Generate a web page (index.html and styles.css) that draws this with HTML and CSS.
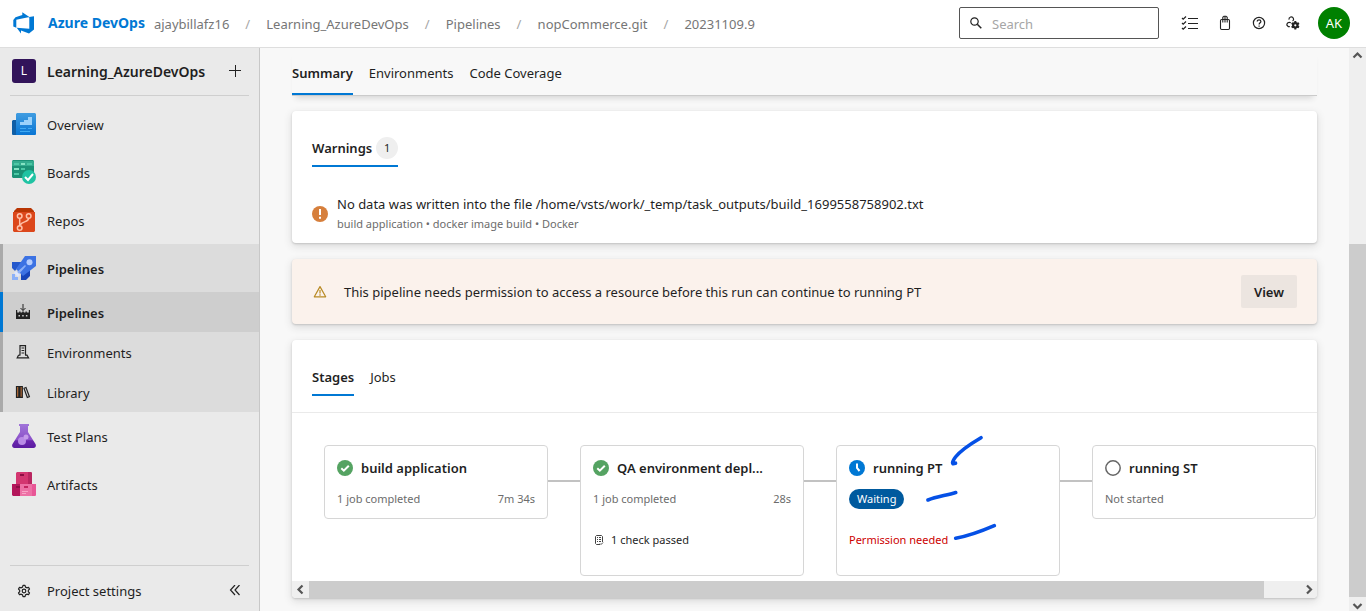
FILE: index.html
```html
<!DOCTYPE html>
<html lang="en">
<head>
<meta charset="utf-8">
<title>Pipelines - Run 20231109.9</title>
<link rel="stylesheet" href="styles.css">
</head>
<body>
<div class="app">
  <header class="topbar">
    <a class="brand" href="#">
      <svg width="24" height="24" viewBox="0 0 24 24"><path fill="#0078d4" d="M22 5.3v13.1l-5 4.1-8-2.9v2.9l-4.300-5.700 12.600 1V5.900zM17.400 6 10.300 1.200v2.900L3.500 6.200 1.300 9v6.500l3 1.300V8.700z"/></svg>
      <span>Azure DevOps</span>
    </a>
    <nav class="crumbs" aria-label="Breadcrumb">
      <a href="#">ajaybillafz16</a><span class="sep">/</span>
      <a href="#">Learning_AzureDevOps</a><span class="sep">/</span>
      <a href="#">Pipelines</a><span class="sep">/</span>
      <a href="#">nopCommerce.git</a><span class="sep">/</span>
      <a href="#">20231109.9</a>
    </nav>
    <label class="search">
      <svg width="12" height="12" viewBox="0 0 12 12" fill="none" stroke="#222"><circle cx="4.500" cy="4.500" r="3.700" stroke-width="1.200"/><path stroke-width="1.500" d="m7.300 7.300 4 4"/></svg>
      <input type="text" placeholder="Search" aria-label="Search">
    </label>
    <div class="tools">
      <button class="tool" aria-label="Work items"><svg width="18" height="16" viewBox="0 0 18 16" fill="none" stroke="#222" stroke-width="1.200"><path d="M7 3.500h10M7 8.500h10M7 13.500h10M1 3l1.200 1.200L5 1.500M1 8l1.200 1.200L5 6.500M1 13l1.200 1.200L5 11.500"/></svg></button>
      <button class="tool" aria-label="Marketplace"><svg width="16" height="16" viewBox="0 0 16 16" fill="none" stroke="#222" stroke-width="1.100"><rect x="3.500" y="4.500" width="9" height="10" rx="1.200"/><path d="M5.800 7.500V2.300L7 1.200h2l1.200 1.100v5.200M8 1.200v6.300"/></svg></button>
      <button class="tool" aria-label="Help"><svg width="16" height="16" viewBox="0 0 16 16" fill="none" stroke="#222" stroke-width="1.200"><circle cx="8" cy="8" r="5.600"/><path d="M6.200 6.600C6.200 4.200 9.900 4.300 9.900 6.500 9.900 7.800 8.100 7.800 8.100 9.500M8.100 10.600v1.200"/></svg></button>
      <button class="tool" aria-label="User settings"><svg width="16" height="16" viewBox="0 0 16 16" fill="none" stroke="#222" stroke-width="1.200"><path d="M4 4.600a2.300 2.300 0 1 1 3.600 1.500M5.800 7.700C3.400 6.700 1.800 8 1.800 10l1.500 1.600h1.500"/><circle cx="10.300" cy="10.300" r="2.200" stroke-width="2.200"/><path stroke-width="2" d="M10.300 6v2M10.300 12.600v2M6.600 8.200l1.800 1M12.200 11.400l1.800 1M6.600 12.400l1.800-1M12.200 9.200l1.800-1"/></svg></button>
    </div>
    <button class="avatar" aria-label="Account">AK</button>
  </header>

  <div class="body">
    <aside class="sidebar">
      <div class="project">
        <span class="project-badge">L</span>
        <a class="project-name" href="#">Learning_AzureDevOps</a>
        <button class="icon-btn" aria-label="Add"><svg width="12" height="12" viewBox="0 0 12 12" stroke="#222" stroke-width="1"><path d="M6.500 0v12M0 5.500h12"/></svg></button>
      </div>
      <nav class="nav">
        <a class="hub" href="#">
          <svg width="24" height="24" viewBox="0 0 24 24"><defs><linearGradient id="ov" x2="0" y2="1"><stop stop-color="#419de1"/><stop offset="1" stop-color="#0875d4"/></linearGradient></defs><path fill="#0f5ea6" d="M1 8h4v15H1a1 1 0 0 1-1-1V9z"/><path fill="url(#ov)" d="M5 1h18l1 1v20a1 1 0 0 1-1 1H4V2z"/><path fill="#9bd2fb" d="M16 5h4v8H8v-3h4V8h4z"/><path fill="#3faaf2" d="M8 16h6v1H8zM16 16h4v1h-4zM8 19h10v1H8z"/></svg>
          <span>Overview</span></a>
        <a class="hub" href="#">
          <svg width="24" height="24" viewBox="0 0 24 24"><path fill="#1b9276" d="M1 0h20l1 1v16l-1 1H1l-1-1V1z"/><path fill="#34ab8e" d="M0 1h22v5H0z"/><path fill="#85e3c3" d="M9 3h4v2H9zM2 8h5v2H2z"/><path fill="#4cc8a5" d="M2 3h5v2H2zM15 3h5v2h-5zM9 8h4v2H9zM2 13h5v2H2z"/><circle cx="17" cy="17" r="7" fill="#20c3a3"/><path d="m13 17 3 3 5-6" fill="none" stroke="#fff" stroke-width="2"/></svg>
          <span>Boards</span></a>
        <a class="hub" href="#">
          <svg width="24" height="24" viewBox="0 0 24 24"><path fill="#b83503" d="M5 0h14l3 3v2H2V3z"/><path fill="#dc471b" d="M1 4h22v19l-1 1H2l-1-1z"/><g fill="none" stroke="#ffc1a8" stroke-width="1.500"><circle cx="7.700" cy="8" r="2.300"/><circle cx="16.700" cy="8" r="2.300"/><circle cx="7.700" cy="20" r="2.300"/><path d="M7.700 10.300v7.300M16.700 10.300c0 4-7 3-8.300 6.500"/></g></svg>
          <span>Repos</span></a>
        <div class="hub-group">
          <a class="hub hub-on" href="#">
            <svg width="24" height="24" viewBox="0 0 24 24"><path fill="#2458cc" d="M0 6h10l-7 9-3-3z"/><path fill="#1745b8" d="M9 18l9-6v8l-4 4H9z"/><path fill="#3c72e3" d="M13 0h11v10L11 20l-7-7z"/><circle cx="17.500" cy="6.300" r="3" fill="#b4cdff"/><path fill="#8bb0f8" d="m5 16 8-7 1 1-7 8zM0 18h3v3h3v3H0z"/><path fill="#dce6ff" d="m4 15 4 4-2 2-4-4z"/></svg>
            <span>Pipelines</span></a>
          <a class="sub sub-on" href="#">
            <svg width="16" height="16" viewBox="0 0 16 16" fill="none" stroke="#222"><path d="M8 0v6.500M5.500 4 8 6.500 10.500 4"/><path fill="#222" stroke="none" fill-rule="evenodd" d="M1 6h1.200v2.500h2V7.500h1.300v1h1.700v-1h1.600v1h1.700v-1h1.300v1h2V6H15v9H1zM3.500 11v1.500H5V11zm3.700 0v1.500h1.500V11zm3.700 0v1.500h1.500V11z"/></svg>
            <span>Pipelines</span></a>
          <a class="sub" href="#">
            <svg width="16" height="16" viewBox="0 0 16 16" fill="none" stroke="#222" stroke-width="1.200"><path d="M5 11V1.600h5.500V11M6.500 4h2.700M6.500 6.500h2.700M6.500 9h2.700M3.500 11.200H5.500M10 11.200h2l1.500 2.600H2.200l1.300-2.600"/></svg>
            <span>Environments</span></a>
          <a class="sub" href="#">
            <svg width="16" height="16" viewBox="0 0 16 16" fill="none" stroke="#222" stroke-width="1.200"><path fill="#b56b35" d="M1.500 2.500h2.300v10.900H1.500zM5 2.500h2.300v10.900H5z"/><path d="m9 4.300 2-.8 3.400 9.200-2.100.8z"/></svg>
            <span>Library</span></a>
        </div>
        <a class="hub" href="#">
          <svg width="24" height="24" viewBox="0 0 24 24"><defs><linearGradient id="tp" x2="0" y2="1"><stop stop-color="#a175d9"/><stop offset=".68" stop-color="#8a4fc8"/><stop offset=".69" stop-color="#6b27ae"/><stop offset="1" stop-color="#5b1ca1"/></linearGradient></defs><path fill="url(#tp)" d="M7 0h10v2h-1v6l7.500 12c1 2 0 4-2 4h-19c-2 0-3-2-2-4L8 8V2H7z"/><circle cx="10" cy="17" r="4" fill="#b98be6"/><circle cx="14" cy="13" r="2.500" fill="#c59bea"/></svg>
          <span>Test Plans</span></a>
        <a class="hub" href="#">
          <svg width="24" height="24" viewBox="0 0 24 24"><path fill="#d33670" d="M5 0h14l1 1v11H4V1z"/><path fill="#b92660" d="M16 0h3l1 1v11h-4z"/><path fill="#b3165a" d="M0 12h8v12H1l-1-1z"/><path fill="#ed70a5" d="M8 12h16v11l-1 1H8z"/><path fill="#e85696" d="M20 12h4v11l-1 1h-3z"/><path fill="#8c0e43" d="M8 2h4v2H8zM4 14h4v2H4z"/><path fill="#c32560" d="M12 14h4v2h-4z"/><path stroke="#f7a5c7" d="M10 19.500h6M10 21.500h4"/></svg>
          <span>Artifacts</span></a>
      </nav>
      <div class="settings">
        <a class="settings-link" href="#">
          <svg width="16" height="16" viewBox="0 0 16 16" fill="none" stroke="#222" stroke-width="1.200"><circle cx="8" cy="8" r="1.800"/><path stroke-linejoin="round" d="M7 2.400h2l.5 1.700 1.300.7 1.700-.5 1 1.700-1.200 1.300v1.400l1.200 1.300-1 1.700-1.700-.5-1.300.7L9 13.600H7l-.5-1.700-1.300-.7-1.700.5-1-1.700 1.200-1.300V7.300L2.500 6l1-1.700 1.700.5 1.300-.7z"/></svg>
          <span>Project settings</span></a>
        <button class="icon-btn" aria-label="Collapse"><svg width="12" height="12" viewBox="0 0 12 12" fill="none" stroke="#222" stroke-width="1.200"><path d="M6 0 1.500 5 6 10M10.500 0 6 5l4.500 5"/></svg></button>
      </div>
    </aside>

    <main class="main">
      <div class="tabs run-tabs" role="tablist">
        <button class="tab tab-on" role="tab">Summary</button>
        <button class="tab" role="tab">Environments</button>
        <button class="tab" role="tab">Code Coverage</button>
      </div>

      <section class="card warnings">
        <div class="tabs" role="tablist">
          <button class="tab tab-on" role="tab">Warnings <span class="count">1</span></button>
        </div>
        <div class="warning">
          <svg width="16" height="16" viewBox="0 0 16 16"><circle cx="8" cy="8" r="8" fill="#d67f3c"/><path stroke="#fff" stroke-width="2" d="M8 3v6M8 10.700v2"/></svg>
          <div>
            <div class="warning-text">No data was written into the file /home/vsts/work/_temp/task_outputs/build_1699558758902.txt</div>
            <div class="small muted">build application • docker image build • Docker</div>
          </div>
        </div>
      </section>

      <section class="card notice">
        <svg width="16" height="16" viewBox="0 0 16 16" fill="none" stroke="#b88a24" stroke-width="1.200"><path stroke-linejoin="round" d="M8 2.600 13.700 12.800H2.300zM8 6v3.500M8 10.300v1.500"/></svg>
        <span class="notice-text">This pipeline needs permission to access a resource before this run can continue to running PT</span>
        <button class="view">View</button>
      </section>

      <section class="card stages">
        <div class="tabs stage-tabs" role="tablist">
          <button class="tab tab-on" role="tab">Stages</button>
          <button class="tab" role="tab">Jobs</button>
        </div>
        <div class="flow">
          <article class="stage">
            <h3><svg width="16" height="16" viewBox="0 0 16 16"><circle cx="8" cy="8" r="8" fill="#55a362"/><path d="m4.300 8.300 2.500 2.400 5-5" fill="none" stroke="#fff" stroke-width="2"/></svg><span>build application</span></h3>
            <div class="row small muted"><span>1 job completed</span><span>7m 34s</span></div>
          </article>
          <div class="link"></div>
          <article class="stage stage-tall">
            <h3><svg width="16" height="16" viewBox="0 0 16 16"><circle cx="8" cy="8" r="8" fill="#55a362"/><path d="m4.300 8.300 2.500 2.400 5-5" fill="none" stroke="#fff" stroke-width="2"/></svg><span>QA environment depl...</span></h3>
            <div class="row small muted"><span>1 job completed</span><span>28s</span></div>
            <div class="check small"><svg width="12" height="12" viewBox="0 0 12 12" fill="none" stroke="#444"><path d="M7 10.500H3.500l-1-1v-7l1-1h5l1 1V8M4 3.500h1M6 3.500h2M4 5.500h1M6 5.500h2M4 7.500h1M6 7.500h2M7 9.500l1 1 2-2"/></svg><span>1 check passed</span></div>
          </article>
          <div class="link"></div>
          <article class="stage stage-tall">
            <h3><svg width="16" height="16" viewBox="0 0 16 16"><circle cx="8" cy="8" r="8" fill="#0078d4"/><path d="M8 3.500V8l2.500 3" fill="none" stroke="#fff" stroke-width="2"/></svg><span>running PT</span></h3>
            <div class="row small"><span class="pill">Waiting</span></div>
            <div class="check small error">Permission needed</div>
            <svg class="ink" width="90" height="120" viewBox="0 0 90 120" fill="none" stroke="#0550e6" stroke-width="3.600" stroke-linecap="round" stroke-linejoin="round"><path d="M65 8.700C56 14 45 21 39.500 28c-3 4-3.500 6-2.500 6.800l2.500-.6M12 71c9-3.500 18-4.500 27.700-7.500M39.700 109.300C53 107 66 102 78.300 96.700"/></svg>
          </article>
          <div class="link"></div>
          <article class="stage">
            <h3><svg width="16" height="16" viewBox="0 0 16 16"><circle cx="8" cy="8" r="7.200" fill="#fff" stroke="#666" stroke-width="1.500"/></svg><span>running ST</span></h3>
            <div class="row small muted"><span>Not started</span></div>
          </article>
        </div>
        <div class="hscroll">
          <span class="arrow"><svg width="17" height="17" viewBox="0 0 17 17" fill="none" stroke="#555" stroke-width="2.200"><path d="m10.500 4.500-4 4 4 4"/></svg></span>
          <span class="hthumb"></span><span class="htrack"></span>
          <span class="arrow"><svg width="17" height="17" viewBox="0 0 17 17" fill="none" stroke="#555" stroke-width="2.200"><path d="m7 4.500 4 4-4 4"/></svg></span>
        </div>
      </section>
    </main>

    <div class="vscroll">
      <span class="arrow"><svg width="17" height="17" viewBox="0 0 17 17" fill="none" stroke="#555" stroke-width="2.200"><path d="m4.500 9.500 4-4 4 4"/></svg></span>
      <span class="vtrack"></span><span class="vthumb"></span>
      <span class="arrow arrow-end"><svg width="17" height="17" viewBox="0 0 17 17" fill="none" stroke="#555" stroke-width="2.200"><path d="m4.500 7 4 4 4-4"/></svg></span>
    </div>
  </div>
</div>
</body>
</html>
```
FILE: styles.css
```css
* { box-sizing: border-box; }
body { margin: 0; font: 13px/20px "Noto Sans", "Open Sans", sans-serif; color: #1f1f1f; background: #f8f8f8; }
a { color: inherit; text-decoration: none; }
button { font: inherit; color: inherit; border: 0; background: none; padding: 0; }
svg { display: block; flex: none; }

.app { display: flex; flex-direction: column; height: 100vh; overflow: hidden; }
.topbar { display: flex; align-items: center; flex: none; height: 48px; padding: 0 16px 2px 12px; background: #fff; border-bottom: 1px solid #dedede; }
.brand { display: flex; align-items: center; gap: 12px; color: #0078d4; font-size: 14px; font-weight: 700; white-space: nowrap; }
.crumbs { display: flex; gap: 16px; margin-left: 9px; padding-top: 2px; color: #767676; white-space: nowrap; }
.sep { width: 5px; color: #a6a6a6; }
.search { display: flex; align-items: center; gap: 10px; width: 200px; height: 32px; margin-left: auto; padding: 0 10px; border: 1px solid #555; border-radius: 2px; }
.search input { flex: 1; min-width: 0; border: 0; outline: 0; padding: 2px 0 0; font: inherit; background: none; }
.search input::placeholder { color: #a6a6a6; }
.tools { display: flex; gap: 18px; margin: 0 17px 0 22px; }
.tool { display: flex; width: 16px; height: 16px; justify-content: center; align-items: center; }
.tool:first-child { width: 18px; }
.avatar { width: 32px; height: 32px; border-radius: 50%; background: #008000; color: #fff; }

.body { display: flex; flex: 1; min-height: 0; }
.sidebar { display: flex; flex-direction: column; flex: none; width: 260px; background: #eaeaea; border-right: 1px solid #c8c8c8; }
.project { display: flex; align-items: center; height: 48px; margin: 0 10px; padding: 0 8px 2px 2px; border-bottom: 1px solid #cfcfcf; }
.project-badge { width: 24px; height: 24px; border-radius: 3px; background: #32145a; color: #fff; text-align: center; line-height: 24px; font-size: 12px; }
.project-name { flex: 1; margin-left: 11px; padding-top: 2px; font-size: 14px; font-weight: 600; }
.icon-btn { display: flex; }
.nav { padding-top: 4px; }
.nav span { padding-top: 2px; }
.hub { display: flex; align-items: center; gap: 11px; height: 48px; padding-left: 12px; }
.hub-group { background: #dcdcdc; box-shadow: inset 3px 0 #aaa; }
.hub-on, .sub-on { font-weight: 600; }
.sub { display: flex; align-items: center; gap: 16px; height: 40px; padding-left: 15px; }
.sub-on { background: #cecece; box-shadow: inset 3px 0 #0078d4; }
.settings { display: flex; align-items: center; justify-content: space-between; height: 46px; margin: auto 10px 0; padding: 4px 8px 0 6px; border-top: 1px solid #cfcfcf; }
.settings-link { display: flex; align-items: center; gap: 15px; }

.main { flex: 1; min-width: 0; padding: 0 32px; overflow: hidden; }
.tabs { display: flex; gap: 16px; }
.tab { display: flex; align-items: center; gap: 4px; height: 40px; padding-top: 4px; border-bottom: 2px solid transparent; white-space: nowrap; }
.tab-on { font-weight: 600; border-bottom-color: #0078d4; }
.count { width: 22px; height: 22px; border-radius: 50%; background: #efefef; font-size: 11px; font-weight: 400; line-height: 22px; text-align: center; }
.run-tabs { box-shadow: 0 1px 0 #cbcbcb, 0 7px 6px -4px #d4d4d4; }
.run-tabs .tab { height: 47px; }
.card { margin-top: 16px; background: #fff; border-radius: 4px; box-shadow: 0 1px 2px #c4c4c4, 0 3px 8px #d8d8d8; overflow: hidden; }
.warnings { padding: 16px 20px 9px; }
.warning { display: flex; align-items: center; gap: 9px; margin-top: 27px; }
.warning-text { line-height: 20px; }
.small { font-size: 11px; }
.muted { color: #6c6c6c; }
.notice { display: flex; align-items: center; gap: 16px; padding: 16px 20px; background: #fbf2ec; }
.notice-text { flex: 1; }
.view { height: 33px; padding: 0 13px; border-radius: 2px; background: #ece5e0; font-weight: 600; }

.stage-tabs { padding: 16px 20px; border-bottom: 1px solid #eaeaea; }
.flow { display: flex; align-items: flex-start; padding: 32px 0 5px 32px; }
.stage { position: relative; flex: none; width: 224px; min-height: 74px; padding: 12px 12px 8px; border: 1px solid #d6d6d6; border-radius: 4px; }
.stage-tall { min-height: 131px; }
.stage h3 { display: flex; align-items: center; gap: 8px; margin: 0; font-size: 13px; font-weight: 600; line-height: 20px; white-space: nowrap; }
.row { display: flex; justify-content: space-between; margin-top: 11px; }
.check { display: flex; align-items: center; gap: 6px; margin-top: 21px; }
.error { color: #cd0000; }
.pill { padding: 0 8px; border-radius: 10px; background: #005a9e; color: #fff; }
.link { flex: none; width: 32px; height: 2px; margin-top: 35px; background: #c2c2c2; }
.ink { position: absolute; left: 79px; top: -17px; }

.hscroll { display: flex; height: 17px; background: #efefef; }
.arrow { flex: none; width: 17px; height: 17px; }
.hthumb { flex: 955; background: #cccccc; }
.htrack { flex: 36; }
.vscroll { display: flex; flex-direction: column; flex: none; width: 17px; background: #efefef; }
.vtrack { flex: 179; }
.vthumb { flex: 353; background: #cccccc; }
.arrow-end { height: 14px; }
```
